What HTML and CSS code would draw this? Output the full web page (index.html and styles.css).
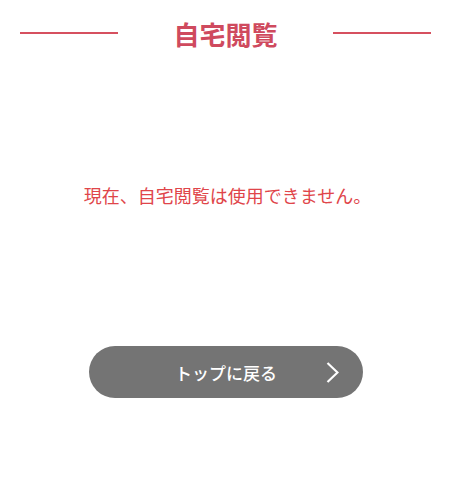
FILE: index.html
```html
<!DOCTYPE html>
<html lang="ja">
<head>
<meta charset="utf-8">
<link rel="stylesheet" href="styles.css">
</head>
<body>
<header class="head">
  <span class="line"></span>
  <h1 class="title">自宅閲覧</h1>
  <span class="line"></span>
</header>
<p class="msg">現在、自宅閲覧は使用できません。</p>
<div class="actions">
  <a class="btn" href="#">
    <span class="btn-label">トップに戻る</span>
    <svg class="chev" width="13" height="21" viewBox="0 0 13 21" aria-hidden="true">
      <polyline points="1.5,1 11.5,10.5 1.5,20" fill="none" stroke="#fff" stroke-width="2.2"/>
    </svg>
  </a>
</div>
</body>
</html>
```
FILE: styles.css
```css
html, body { margin: 0; padding: 0; background: #fff; }
body { font-family: "Noto Sans CJK JP", "Noto Sans", sans-serif; }
.head {
  display: flex;
  align-items: center;
  justify-content: space-between;
  padding: 0 20px;
  margin-top: 16px;
  height: 36px;
}
.line { width: 98px; height: 1.5px; background: #d6505f; margin-top: -2px; }
.title {
  margin: 0;
  font-size: 26px;
  line-height: 36px;
  font-weight: 700;
  color: #cf4a5e;
  letter-spacing: 0;
}
.msg {
  margin: 131px 0 0;
  text-align: center;
  font-size: 18px;
  line-height: 24px;
  font-weight: 400;
  color: #e0454a;
  padding-left: 4px;
}
.actions { display: flex; justify-content: center; margin-top: 139px; padding-left: 1px; }
.btn {
  position: relative;
  display: flex;
  align-items: center;
  justify-content: center;
  width: 274px;
  height: 52px;
  border-radius: 26px;
  background: #747474;
  text-decoration: none;
}
.btn-label { color: #fff; font-size: 17px; font-weight: 500; line-height: 1; }
.chev { position: absolute; right: 24px; top: 16px; }
```
